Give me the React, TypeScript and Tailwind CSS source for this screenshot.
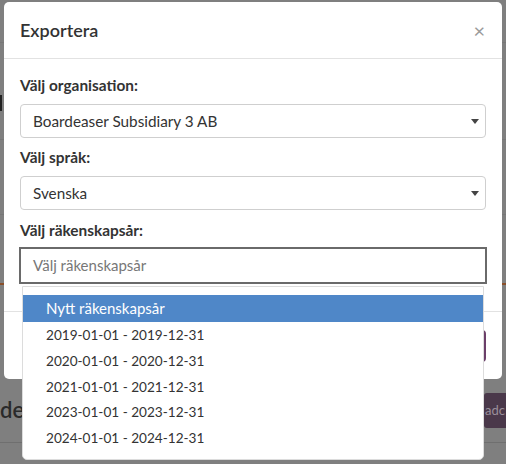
import React from 'react';

const years = [
  '2019-01-01 - 2019-12-31',
  '2020-01-01 - 2020-12-31',
  '2021-01-01 - 2021-12-31',
  '2023-01-01 - 2023-12-31',
  '2024-01-01 - 2024-12-31',
];

const Caret = () => (
  <svg width="8" height="5" viewBox="0 0 8 5" className="shrink-0">
    <path d="M0 0h8L4 5z" fill="#444" />
  </svg>
);

const SelectBox = ({ value }: { value: string }) => (
  <div className="flex h-[34px] items-center justify-between rounded-[4px] border border-[#cfcfcf] pl-[12px] pr-[6px] text-[15.3px] text-[#333]">
    <span>{value}</span>
    <Caret />
  </div>
);

const Label = ({ text }: { text: string }) => (
  <div className="mb-[9px] text-[15.4px] font-bold leading-[20px] text-[#333]">{text}</div>
);

export default function App() {
  return (
    <div
      className="relative h-[464px] w-[506px] overflow-hidden bg-[#7f7f7f]"
      style={{ fontFamily: 'Lato, "Open Sans", sans-serif' }}
    >
      {/* dimmed page behind the dialog */}
      <div className="flex h-full flex-col">
        <div className="h-[43px] border-b border-[#777]" />
        <div className="h-[97px] border-b border-[#777]">
          <div className="mt-[52px] h-[16px] w-[2px] bg-[#222]" />
        </div>
        <div className="h-[75px] border-b border-[#777]" />
        <div className="h-[70px] border-b-2 border-[#8a4f2a]" />
        <div className="h-[108px]" />
        <div className="flex h-[50px] items-start justify-between border-b border-[#6f6f6f]">
          <span className="text-[22px] font-semibold leading-[34px] text-[#2a2a2a]">de</span>
          <div className="flex h-[35px] w-[22px] items-center rounded-l-[3px] bg-[#4a384a] pl-[1px] text-[13px] text-[#9a8f9a]">
            adc
          </div>
        </div>
      </div>

      {/* dialog */}
      <div className="absolute left-[4px] top-[2px] w-[498px] rounded-[5px] bg-white">
        <div className="flex h-[57px] items-center justify-between border-b border-[#e2e2e2] pl-[16px] pr-[17px]">
          <h2 className="text-[18px] font-semibold text-[#333]">Exportera</h2>
          <span className="text-[20px] leading-none text-[#9a9a9a]">×</span>
        </div>

        <div className="h-[252px] px-[16px] pt-[16px]">
          <Label text="Välj organisation:" />
          <SelectBox value="Boardeaser Subsidiary 3 AB" />
          <div className="h-[9px]" />
          <Label text="Välj språk:" />
          <SelectBox value="Svenska" />
          <div className="h-[10px]" />
          <div className="mb-[7px] text-[15.4px] font-bold leading-[20px] text-[#333]">Välj räkenskapsår:</div>
          <div className="relative -mx-[1px]">
            <div className="flex h-[37px] items-center border-2 border-[#6a6a6a] pl-[12px] text-[15px] text-[#777]">
              Välj räkenskapsår
            </div>
            <ul className="absolute left-[3px] right-[3px] top-[39px] z-10 rounded-b-[5px] border border-[#dcdcdc] bg-white pb-[8px] pt-[8px] text-[13.6px] text-[#333]">
              <li className="bg-[#4f87c8] pl-[23px] text-[15px] leading-[27px] text-white">Nytt räkenskapsår</li>
              {years.map((y) => (
                <li key={y} className="pl-[23px] pt-[2px] leading-[23.8px]">
                  {y}
                </li>
              ))}
            </ul>
          </div>
        </div>

        <div className="flex h-[68px] items-start justify-end border-t border-[#e2e2e2] pr-[16px] pt-[18px]">
          <div className="h-[32px] w-[90px] rounded-[4px] bg-[#6b3f69]" />
        </div>
      </div>
    </div>
  );
}
